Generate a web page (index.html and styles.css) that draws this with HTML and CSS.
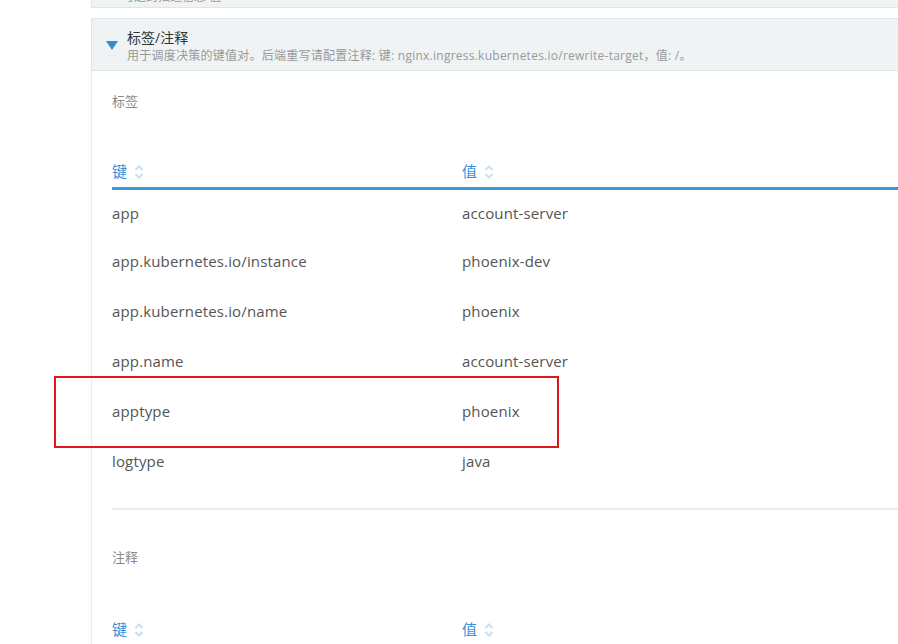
FILE: index.html
```html
<!DOCTYPE html>
<html lang="zh">
<head>
<meta charset="utf-8">
<link rel="stylesheet" href="styles.css">
</head>
<body>
<div class="page">
  <div class="prev-panel"><span class="prev-text">可选的描述信息 值</span></div>
  <div class="panel">
    <div class="panel-head">
      <span class="caret"></span>
      <div class="head-text">
        <div class="title">标签/注释</div>
        <div class="desc">用于调度决策的键值对。后端重写请配置注释: 键: nginx.ingress.kubernetes.io/rewrite-target，值: /。</div>
      </div>
    </div>
    <div class="panel-body">
      <div class="section-label">标签</div>
      <table class="kv">
        <thead>
          <tr><th class="col-key">键<span class="sort"><svg width="10" height="16" viewBox="0 0 10 16"><path d="M1.5 6 L5 2.5 L8.5 6 M1.5 10 L5 13.5 L8.5 10" fill="none" stroke="#c6e0f5" stroke-width="2"/></svg></span></th><th>值<span class="sort"><svg width="10" height="16" viewBox="0 0 10 16"><path d="M1.5 6 L5 2.5 L8.5 6 M1.5 10 L5 13.5 L8.5 10" fill="none" stroke="#c6e0f5" stroke-width="2"/></svg></span></th></tr>
        </thead>
        <tbody>
          <tr><td>app</td><td>account-server</td></tr>
          <tr><td>app.kubernetes.io/instance</td><td>phoenix-dev</td></tr>
          <tr><td>app.kubernetes.io/name</td><td>phoenix</td></tr>
          <tr><td>app.name</td><td>account-server</td></tr>
          <tr><td>apptype</td><td>phoenix</td></tr>
          <tr><td>logtype</td><td>java</td></tr>
        </tbody>
      </table>
      <div class="divider"></div>
      <div class="section-label second">注释</div>
      <table class="kv">
        <thead>
          <tr><th class="col-key">键<span class="sort"><svg width="10" height="16" viewBox="0 0 10 16"><path d="M1.5 6 L5 2.5 L8.5 6 M1.5 10 L5 13.5 L8.5 10" fill="none" stroke="#c6e0f5" stroke-width="2"/></svg></span></th><th>值<span class="sort"><svg width="10" height="16" viewBox="0 0 10 16"><path d="M1.5 6 L5 2.5 L8.5 6 M1.5 10 L5 13.5 L8.5 10" fill="none" stroke="#c6e0f5" stroke-width="2"/></svg></span></th></tr>
        </thead>
      </table>
    </div>
  </div>
  <div class="highlight"></div>
</div>
</body>
</html>
```
FILE: styles.css
```css
html, body {
  margin: 0;
  padding: 0;
  background: #fff;
  overflow: hidden;
}
body {
  font-family: "Open Sans", "Noto Sans CJK SC", sans-serif;
  color: #555;
  width: 898px;
  height: 644px;
}
.page {
  position: relative;
  padding-left: 91px;
  height: 644px;
  overflow: hidden;
}
.prev-panel {
  height: 7px;
  background: #eff3f4;
  border-left: 1px solid #dfe5e8;
  border-bottom: 1px solid #dfe5e8;
  overflow: hidden;
  position: relative;
}
.prev-text {
  position: absolute;
  left: 30px;
  top: -11px;
  font-size: 12px;
  line-height: 16px;
  color: #999;
}
.panel {
  margin-top: 10px;
}
.panel-head {
  display: flex;
  align-items: flex-start;
  background: #eff3f4;
  border: 1px solid #dfe5e8;
  border-right: none;
  box-sizing: border-box;
  height: 53px;
  padding: 9px 0 0 14px;
}
.caret {
  width: 0;
  height: 0;
  border-left: 6px solid transparent;
  border-right: 6px solid transparent;
  border-top: 9px solid #2f8fd6;
  margin-top: 13px;
  margin-right: 9px;
}
.title {
  font-size: 14px;
  line-height: 20px;
  color: #333;
}
.desc {
  font-size: 12px;
  line-height: 16px;
  color: #999;
  white-space: nowrap;
  letter-spacing: 0.25px;
}
.panel-body {
  border-left: 1px solid #ececec;
  padding: 20px 0 0 20px;
  height: 600px;
}
.section-label {
  font-size: 13px;
  line-height: 20px;
  color: #888;
  height: 66px;
}
.section-label.second {
  height: 68px;
}
.kv {
  border-collapse: collapse;
  width: 800px;
  font-size: 15px;
}
.kv th {
  text-align: left;
  font-weight: normal;
  color: #3a8fd7;
  font-size: 15px;
  padding: 2px 0 4px 0;
  border-bottom: 3px solid #3a96d6;
  line-height: 24px;
}
.kv th.col-key, .kv td:first-child {
  width: 350px;
}
.sort {
  display: inline-block;
  vertical-align: middle;
  margin-left: 7px;
  position: relative;
  top: -1px;
}
.sort svg { display: block; }
.kv td {
  height: 50px;
  padding: 0;
  color: #555;
  vertical-align: middle;
  letter-spacing: 0.15px;
}
.kv tbody tr:first-child td {
  height: 46px;
}
.divider {
  height: 2px;
  background: #e8eeee;
  margin-top: 22px;
  margin-bottom: 37px;
}
.highlight {
  position: absolute;
  left: 54px;
  top: 376px;
  width: 501px;
  height: 68px;
  border: 2px solid #e3141e;
}
```
